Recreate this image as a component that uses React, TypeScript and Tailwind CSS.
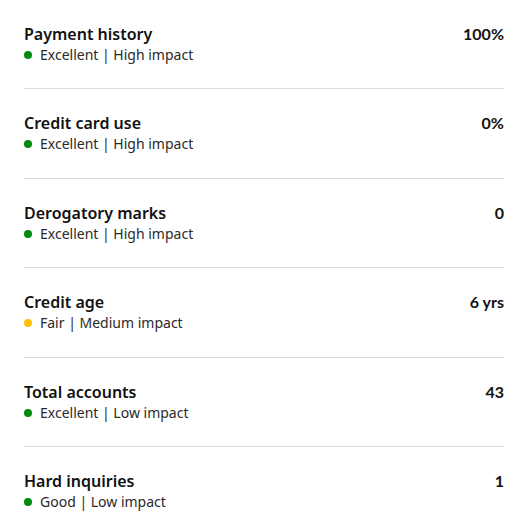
import React from "react";

type Factor = {
  title: string;
  rating: string;
  impact: string;
  value: string;
  tone: "green" | "yellow";
};

const factors: Factor[] = [
  { title: "Payment history", rating: "Excellent", impact: "High impact", value: "100%", tone: "green" },
  { title: "Credit card use", rating: "Excellent", impact: "High impact", value: "0%", tone: "green" },
  { title: "Derogatory marks", rating: "Excellent", impact: "High impact", value: "0", tone: "green" },
  { title: "Credit age", rating: "Fair", impact: "Medium impact", value: "6 yrs", tone: "yellow" },
  { title: "Total accounts", rating: "Excellent", impact: "Low impact", value: "43", tone: "green" },
  { title: "Hard inquiries", rating: "Good", impact: "Low impact", value: "1", tone: "green" },
];

export default function App() {
  return (
    <div className="w-[528px] h-[527px] bg-white overflow-hidden font-['Noto_Sans',sans-serif] text-[#1a1a1a]">
      <ul className="flex flex-col pl-6 pr-6">
        {factors.map((f, i) => (
          <li
            key={f.title}
            className={`flex justify-between items-start pt-6 pb-[23.4px] ${
              i < factors.length - 1 ? "border-b border-[#d9d9d9]" : ""
            }`}
          >
            <div className="flex flex-col">
              <h3 className="text-[16px] leading-5 font-semibold text-[#111]">{f.title}</h3>
              <p className="flex items-center gap-2 text-[14px] leading-5 text-[#2a2a2a] mt-px">
                <span
                  className={`w-2 h-2 rounded-full ${
                    f.tone === "green" ? "bg-[#008a0e]" : "bg-[#ffc107]"
                  }`}
                ></span>
                {f.rating} | {f.impact}
              </p>
            </div>
            <span className="text-[16px] leading-5 font-bold font-['Lato',sans-serif] text-[#111]">
              {f.value}
            </span>
          </li>
        ))}
      </ul>
    </div>
  );
}
